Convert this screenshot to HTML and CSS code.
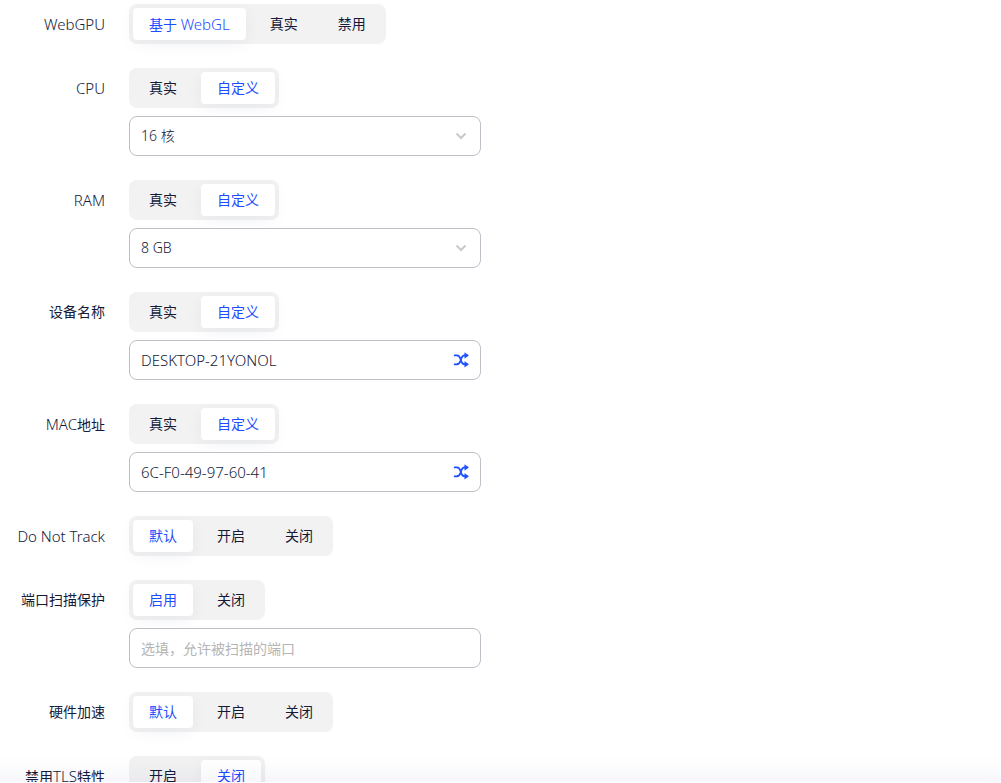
FILE: index.html
```html
<!DOCTYPE html>
<html lang="zh-CN">
<head>
<meta charset="utf-8">
<meta name="viewport" content="width=device-width, initial-scale=1">
<title>WebGPU</title>
<link rel="stylesheet" href="styles.css">
</head>
<body>
<svg class="sprite" aria-hidden="true">
  <symbol id="shuffle" viewBox="0 0 18 18"><path d="M1 3.800h3c2.500 0 4 2 4.800 5.200s2 4.800 4.500 4.800h3M1 13.800h3c2.500 0 4-1.600 4.800-4.800s2-5.200 4.500-5.200h3" fill="none" stroke="currentColor" stroke-width="2"/><path d="M13.200.8l4.300 3-4.300 3.200zM13.200 10.800l4.300 3-4.300 3.200z" fill="currentColor" stroke="currentColor" stroke-width="0.500" stroke-linejoin="round"/></symbol>
  <symbol id="chevron" viewBox="0 0 12 12"><path d="M1.500 3.500L6 8l4.500-4.500" fill="none" stroke="currentColor" stroke-width="2"/></symbol>
</svg>
<form class="form">
  <div class="row" role="radiogroup" aria-labelledby="l-gpu">
    <span class="label latin" id="l-gpu">WebGPU</span>
    <div class="controls">
      <div class="segmented">
        <label class="segment"><input type="radio" name="gpu" checked><span>基于 <b class="latin">WebGL</b></span></label>
        <label class="segment"><input type="radio" name="gpu"><span>真实</span></label>
        <label class="segment"><input type="radio" name="gpu"><span>禁用</span></label>
      </div>
    </div>
  </div>
  <div class="row" role="radiogroup" aria-labelledby="l-cpu">
    <label class="label latin" id="l-cpu" for="cpu">CPU</label>
    <div class="controls">
      <div class="segmented">
        <label class="segment"><input type="radio" name="cpu-mode"><span>真实</span></label>
        <label class="segment"><input type="radio" name="cpu-mode" checked><span>自定义</span></label>
      </div>
      <div class="field field-select">
        <select id="cpu" class="input"><option>16 核</option></select>
        <svg class="chevron" aria-hidden="true"><use href="#chevron"/></svg>
      </div>
    </div>
  </div>
  <div class="row" role="radiogroup" aria-labelledby="l-ram">
    <label class="label latin" id="l-ram" for="ram">RAM</label>
    <div class="controls">
      <div class="segmented">
        <label class="segment"><input type="radio" name="ram-mode"><span>真实</span></label>
        <label class="segment"><input type="radio" name="ram-mode" checked><span>自定义</span></label>
      </div>
      <div class="field field-select">
        <select id="ram" class="input"><option>8 GB</option></select>
        <svg class="chevron" aria-hidden="true"><use href="#chevron"/></svg>
      </div>
    </div>
  </div>
  <div class="row" role="radiogroup" aria-labelledby="l-device">
    <label class="label" id="l-device" for="device">设备名称</label>
    <div class="controls">
      <div class="segmented">
        <label class="segment"><input type="radio" name="device-mode"><span>真实</span></label>
        <label class="segment"><input type="radio" name="device-mode" checked><span>自定义</span></label>
      </div>
      <div class="field">
        <input id="device" class="input latin" type="text" value="DESKTOP-21YONOL">
        <button class="shuffle" type="button" aria-labelledby="l-device"><svg class="shuffle-icon" aria-hidden="true"><use href="#shuffle"/></svg></button>
      </div>
    </div>
  </div>
  <div class="row" role="radiogroup" aria-labelledby="l-mac">
    <label class="label" id="l-mac" for="mac"><b class="latin">MAC</b>地址</label>
    <div class="controls">
      <div class="segmented">
        <label class="segment"><input type="radio" name="mac-mode"><span>真实</span></label>
        <label class="segment"><input type="radio" name="mac-mode" checked><span>自定义</span></label>
      </div>
      <div class="field">
        <input id="mac" class="input latin" type="text" value="6C-F0-49-97-60-41">
        <button class="shuffle" type="button" aria-labelledby="l-mac"><svg class="shuffle-icon" aria-hidden="true"><use href="#shuffle"/></svg></button>
      </div>
    </div>
  </div>
  <div class="row" role="radiogroup" aria-labelledby="l-dnt">
    <span class="label latin" id="l-dnt">Do Not Track</span>
    <div class="controls">
      <div class="segmented">
        <label class="segment"><input type="radio" name="dnt" checked><span>默认</span></label>
        <label class="segment"><input type="radio" name="dnt"><span>开启</span></label>
        <label class="segment"><input type="radio" name="dnt"><span>关闭</span></label>
      </div>
    </div>
  </div>
  <div class="row" role="radiogroup" aria-labelledby="l-port">
    <label class="label" id="l-port" for="ports">端口扫描保护</label>
    <div class="controls">
      <div class="segmented">
        <label class="segment"><input type="radio" name="port-mode" checked><span>启用</span></label>
        <label class="segment"><input type="radio" name="port-mode"><span>关闭</span></label>
      </div>
      <div class="field">
        <input id="ports" class="input" type="text" placeholder="选填，允许被扫描的端口">
      </div>
    </div>
  </div>
  <div class="row" role="radiogroup" aria-labelledby="l-hw">
    <span class="label" id="l-hw">硬件加速</span>
    <div class="controls">
      <div class="segmented">
        <label class="segment"><input type="radio" name="hw" checked><span>默认</span></label>
        <label class="segment"><input type="radio" name="hw"><span>开启</span></label>
        <label class="segment"><input type="radio" name="hw"><span>关闭</span></label>
      </div>
    </div>
  </div>
  <div class="row" role="radiogroup" aria-labelledby="l-tls">
    <span class="label" id="l-tls">禁用<b class="latin">TLS</b>特性</span>
    <div class="controls">
      <div class="segmented">
        <label class="segment"><input type="radio" name="tls"><span>开启</span></label>
        <label class="segment"><input type="radio" name="tls" checked><span>关闭</span></label>
      </div>
    </div>
  </div>
</form>
<footer class="footer"></footer>
</body>
</html>
```
FILE: styles.css
```css
* { box-sizing: border-box; }

body {
  display: flex;
  flex-direction: column;
  height: 100vh;
  margin: 0;
  overflow: hidden;
  background: #fff;
  color: #141a38;
  font: 14px/20px "Noto Sans", "Noto Sans CJK SC", sans-serif;
}

.sprite { display: none; }

.form {
  display: flex;
  flex: 1;
  flex-direction: column;
  gap: 24px;
  min-height: 0;
  padding-top: 4px;
  overflow: hidden;
}

.row {
  display: grid;
  grid-template-columns: 105px minmax(0, 352px);
  flex: none;
  column-gap: 24px;
}

.label {
  height: 40px;
  line-height: 40px;
  text-align: right;
  white-space: nowrap;
}

.controls {
  display: flex;
  flex-direction: column;
  align-items: flex-start;
  gap: 8px;
}

.segmented {
  display: flex;
  gap: 8px;
  padding: 4px;
  border-radius: 8px;
  background: #f2f2f2;
}

.segment {
  display: grid;
  grid-template-rows: 32px;
  cursor: pointer;
}

.segment input,
.segment span { grid-area: 1 / 1; }

.segment input {
  appearance: none;
  margin: 0;
  border-radius: 4px;
}

.segment span {
  z-index: 1;
  padding: 0 16px;
  line-height: 32px;
}

.segment input:checked {
  background: #fff;
  box-shadow: 0 4px 16px rgba(28, 35, 110, 0.05);
}

.segment input:checked + span { color: #1c4dff; }

.field {
  display: flex;
  align-items: center;
  width: 100%;
  height: 40px;
  border: 1px solid #bfbfc7;
  border-radius: 8px;
  background: #fff;
}

.input {
  flex: 1;
  min-width: 0;
  height: 100%;
  padding: 0 11px;
  border: 0;
  outline: 0;
  background: transparent;
  color: inherit;
  font: inherit;
}

.latin {
  font-size: 15px;
  font-weight: 300;
}

.input::placeholder { color: #b5b5b5; }

.field-select { display: grid; }

.field-select .input {
  grid-area: 1 / 1;
  appearance: none;
  font-weight: 300;
}

.chevron {
  grid-area: 1 / 1;
  justify-self: end;
  width: 12px;
  height: 12px;
  margin-right: 13px;
  color: #c8c9cc;
  pointer-events: none;
}

.shuffle {
  display: flex;
  margin-right: 11px;
  padding: 0;
  border: 0;
  background: transparent;
  color: #1c4dff;
}

.shuffle-icon {
  width: 16px;
  height: 16px;
}

.footer {
  z-index: 2;
  flex: none;
  height: 1px;
  background: #fff;
  box-shadow: 0 24px 32px 24px rgba(40, 50, 160, 0.08);
}
```
